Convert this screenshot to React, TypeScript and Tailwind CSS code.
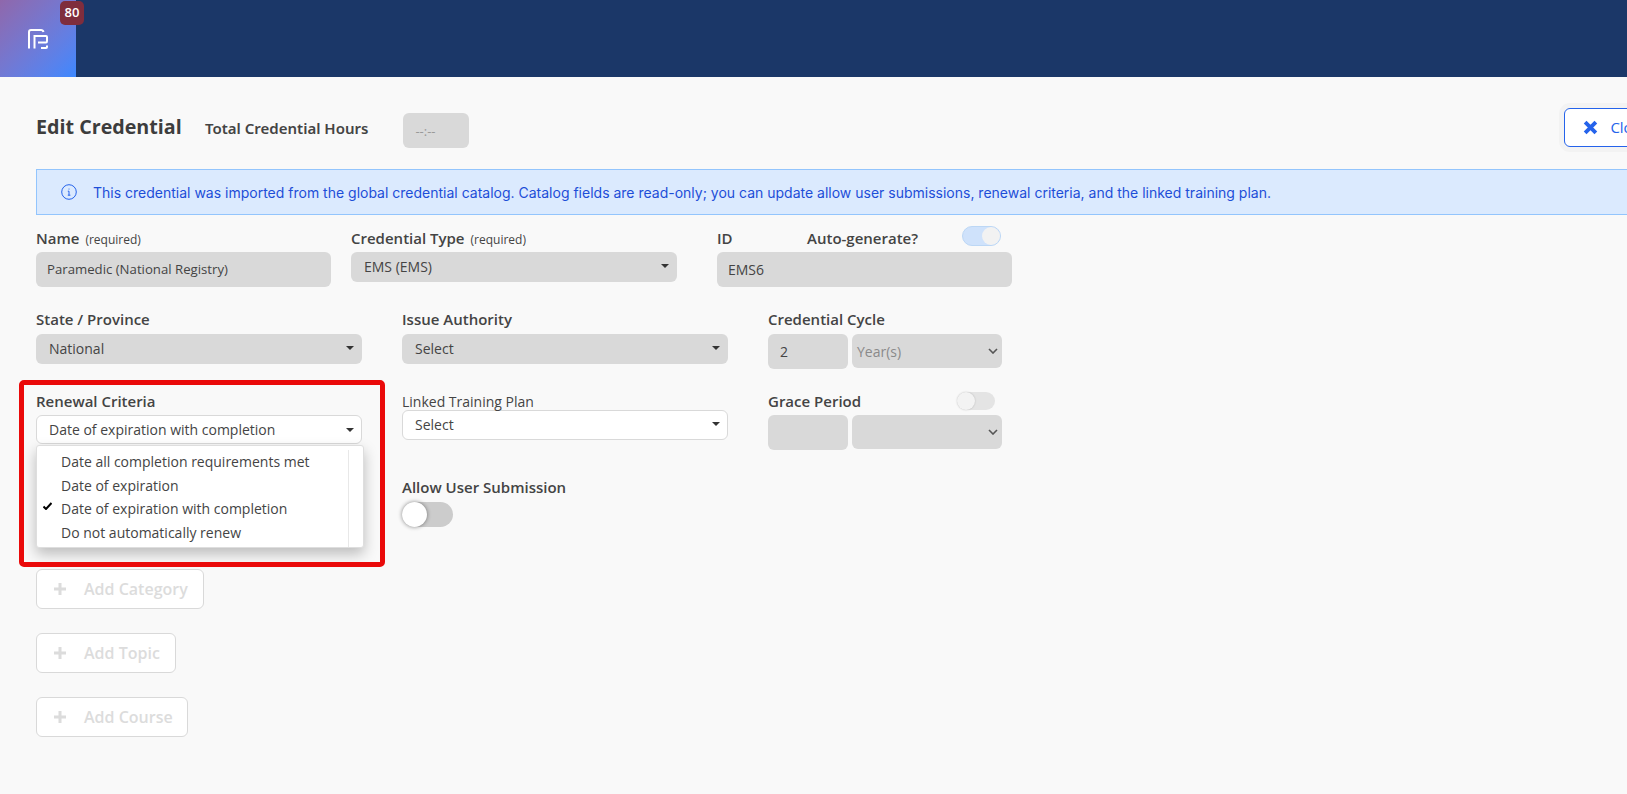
import { ReactNode } from "react";

const Caret = () => (
  <span className="ml-auto h-0 w-0 border-x-[4px] border-t-[4px] border-x-transparent border-t-[#333]" />
);

const Chevron = () => (
  <svg viewBox="0 0 10 6" className="ml-auto h-[6px] w-[10px]" fill="none" stroke="#555" strokeWidth="1.6">
    <path d="M1 1l4 4 4-4" />
  </svg>
);

const Label = ({ children, note, className = "" }: { children: ReactNode; note?: string; className?: string }) => (
  <div className={`flex h-[20px] items-center text-[15px] font-semibold leading-[20px] text-[#444] ${className}`}>
    {children}
    {note && <span className="ml-[6px] mt-[4px] text-[12px] font-normal text-[#444]">{note}</span>}
  </div>
);

const GraySelect = ({ value, className = "" }: { value: string; className?: string }) => (
  <div className={`flex h-[30px] items-center rounded-[6px] bg-[#d9d9d9] pb-[2px] pl-[13px] pr-[8px] text-[14px] text-[#444] ${className}`}>
    {value}
    <Caret />
  </div>
);

const WhiteSelect = ({ value, className = "" }: { value: string; className?: string }) => (
  <div className={`flex items-center rounded-[6px] border border-[#d9d9d9] bg-white pl-[12px] pr-[7px] text-[14px] text-[#444] ${className}`}>
    {value}
    <Caret />
  </div>
);

const AddButton = ({ label, width }: { label: string; width: string }) => (
  <button className={`flex h-[40px] items-center rounded-[6px] border border-[#d9d9d9] bg-white pl-[17px] text-[16px] font-semibold text-[#dcdcdc] ${width}`}>
    <svg viewBox="0 0 12 12" className="mr-[18px] h-[12px] w-[12px]" fill="#dcdcdc">
      <path d="M4.5 0h3v4.5H12v3H7.5V12h-3V7.5H0v-3h4.5z" />
    </svg>
    {label}
  </button>
);

const menuItems = [
  "Date all completion requirements met",
  "Date of expiration",
  "Date of expiration with completion",
  "Do not automatically renew",
];

export default function App() {
  return (
    <div className="h-screen w-full overflow-hidden bg-[#f9f9f9] font-['Open_Sans',sans-serif]">
      <header className="relative flex h-[77px] bg-[#1b3768]">
        <div className="flex w-[76px] items-center justify-center bg-gradient-to-br from-[#8f67ab] to-[#3b88ff]">
          <svg viewBox="0 0 20 20" className="h-[20px] w-[20px]" fill="none" stroke="white" strokeWidth="2">
            <path d="M1 19.500V3Q1 1 3 1H13Q15 1 15.500 3" />
            <path d="M6.500 19.500V7H18Q19 7 19 8V12Q19 13.500 18 13.500H10" />
            <path d="M13 19H18Q19 19 19 18V16.500" />
          </svg>
        </div>
        <span className="absolute left-[60px] top-[1px] flex h-[24px] w-[24px] items-center justify-center rounded-[5px] bg-[#7f2d3d] text-[13px] font-semibold text-white">
          80
        </span>
      </header>

      <main className="relative w-[1760px] px-[36px] pt-[31px]">
        <div className="flex h-[39px] items-start">
          <h1 className="mt-[3px] w-[169px] text-[19.700px] font-bold leading-[32px] text-[#3d3d3d]">Edit Credential</h1>
          <span className="mt-[9px] font-['Noto_Sans',sans-serif] text-[15px] font-semibold leading-[22px] text-[#444]">
            Total Credential Hours
          </span>
          <div className="ml-[35px] mt-[5px] flex h-[35px] w-[66px] items-center rounded-[6px] bg-[#d9d9d9] pl-[12px] pt-[3px] text-[13px] text-[#999]">
            --:--
          </div>
          <button className="ml-[1095px] flex h-[39px] w-[120px] items-center rounded-[6px] border border-[#2563eb] bg-white pl-[18px] text-[15px] text-[#2563eb] ring-[5px] ring-[#f3f3f3]">
            <svg viewBox="0 0 14 14" className="mr-[12px] h-[15px] w-[15px]" fill="none" stroke="#2563eb" strokeWidth="3.600">
              <path d="M2 2l10 10M12 2L2 12" />
            </svg>
            Close
          </button>
        </div>

        <div className="mt-[22px] flex h-[46px] items-center border border-[#93c5fd] bg-[#dbeafe] pl-[24px] font-['Inter',sans-serif] text-[14px] text-[#1d4ed8]">
          <svg viewBox="0 0 16 16" className="mr-[16px] h-[16px] w-[16px]" fill="none" stroke="#2563eb" strokeWidth="1">
            <circle cx="8" cy="8" r="7.300" />
            <path d="M6.800 7.200H8v4M6.800 11.200h2.600M8 4.600v.9" />
          </svg>
          This credential was imported from the global credential catalog. Catalog fields are read-only; you can update allow user submissions, renewal criteria, and the linked training plan.
        </div>

        <div className="mt-[13px] flex gap-[20px]">
          <div className="w-[295px]">
            <Label note="(required)">Name</Label>
            <div className="mt-[4px] flex h-[35px] items-center rounded-[6px] bg-[#d9d9d9] pl-[11px] text-[13.200px] text-[#444]">
              Paramedic (National Registry)
            </div>
          </div>
          <div className="w-[326px]">
            <Label note="(required)">Credential Type</Label>
            <GraySelect value="EMS (EMS)" className="mt-[4px] text-[13.500px]" />
          </div>
          <div className="ml-[20px] w-[295px]">
            <div className="flex items-center">
              <Label className="w-[90px]">ID</Label>
              <Label>Auto-generate?</Label>
              <span className="ml-auto mr-[11px] flex h-[20px] w-[39px] -translate-y-[2px] items-center justify-end rounded-full border border-[#bcd7f5] bg-[#cfe2fb]">
                <span className="h-[18px] w-[18px] rounded-full bg-[#f2f2f2]" />
              </span>
            </div>
            <div className="mt-[4px] flex h-[35px] items-center rounded-[6px] bg-[#d9d9d9] pl-[11px] text-[14px] text-[#444]">
              EMS6
            </div>
          </div>
        </div>

        <div className="mt-[22px] flex gap-[40px]">
          <div className="w-[326px]">
            <Label>State / Province</Label>
            <GraySelect value="National" className="mt-[5px]" />
          </div>
          <div className="w-[326px]">
            <Label>Issue Authority</Label>
            <GraySelect value="Select" className="mt-[5px]" />
          </div>
          <div className="w-[234px]">
            <Label>Credential Cycle</Label>
            <div className="mt-[5px] flex gap-[4px]">
              <div className="flex h-[35px] w-[80px] items-center rounded-[6px] bg-[#d9d9d9] pl-[12px] text-[14px] text-[#444]">2</div>
              <div className="flex h-[34px] w-[150px] items-center rounded-[6px] bg-[#d9d9d9] pl-[5px] pr-[4px] text-[14px] text-[#8a8a8a]">
                Year(s)
                <Chevron />
              </div>
            </div>
          </div>
        </div>

        <div className="mt-[22px] flex gap-[40px]">
          <div className="w-[326px]">
            <Label>Renewal Criteria</Label>
            <WhiteSelect value="Date of expiration with completion" className="mt-[4px] h-[29px]" />
          </div>
          <div className="w-[326px]">
            <div className="flex h-[20px] items-center text-[14px] text-[#444]">Linked Training Plan</div>
            <WhiteSelect value="Select" className="-mt-[1px] h-[30px] pb-[2px]" />
            <Label className="mt-[37px]">Allow User Submission</Label>
            <span className="mt-[5px] flex h-[25px] w-[51px] items-center rounded-full bg-[#cccccc]">
              <span className="h-[25px] w-[25px] rounded-full bg-white shadow-[0_0_4px_rgba(0,0,0,0.45)]" />
            </span>
          </div>
          <div className="w-[234px]">
            <div className="flex items-center">
              <Label>Grace Period</Label>
              <span className="ml-auto mr-[7px] flex h-[18px] w-[38px] items-center rounded-full bg-[#e4e4e4]">
                <span className="h-[18px] w-[18px] rounded-full bg-[#f3f3f3] shadow-[0_0_2px_rgba(0,0,0,0.2)]" />
              </span>
            </div>
            <div className="mt-[4px] flex gap-[4px]">
              <div className="h-[35px] w-[80px] rounded-[6px] bg-[#d9d9d9]" />
              <div className="flex h-[34px] w-[150px] items-center rounded-[6px] bg-[#d9d9d9] pr-[4px]">
                <Chevron />
              </div>
            </div>
          </div>
        </div>

        <div className="mt-[42px] flex flex-col items-start gap-[24px]">
          <AddButton label="Add Category" width="w-[168px]" />
          <AddButton label="Add Topic" width="w-[140px]" />
          <AddButton label="Add Course" width="w-[152px]" />
        </div>

        <div className="absolute left-[36px] top-[368px] h-[103px] w-[328px] rounded-[3px] border border-[#dedede] bg-white shadow-[0_6px_14px_rgba(0,0,0,0.25)]">
          <div className="absolute bottom-0 right-[14px] top-[4px] w-px bg-[#e8e8e8]" />
          <ul className="pt-[4px]">
            {menuItems.map((item, index) => (
              <li key={item} className="relative flex h-[23.500px] items-center pl-[24px] text-[14px] text-[#444]">
                {index === 2 && (
                  <svg viewBox="0 0 9 8" className="absolute left-[6px] top-[5px] h-[8px] w-[9px]" fill="none" stroke="black" strokeWidth="2">
                    <path d="M.5 4.500L3 7 8.500 1" />
                  </svg>
                )}
                {item}
              </li>
            ))}
          </ul>
        </div>

        <div className="pointer-events-none absolute left-[19px] top-[303px] h-[187px] w-[366px] rounded-[5px] border-[5px] border-[#ea0a0a]" />
      </main>
    </div>
  );
}
